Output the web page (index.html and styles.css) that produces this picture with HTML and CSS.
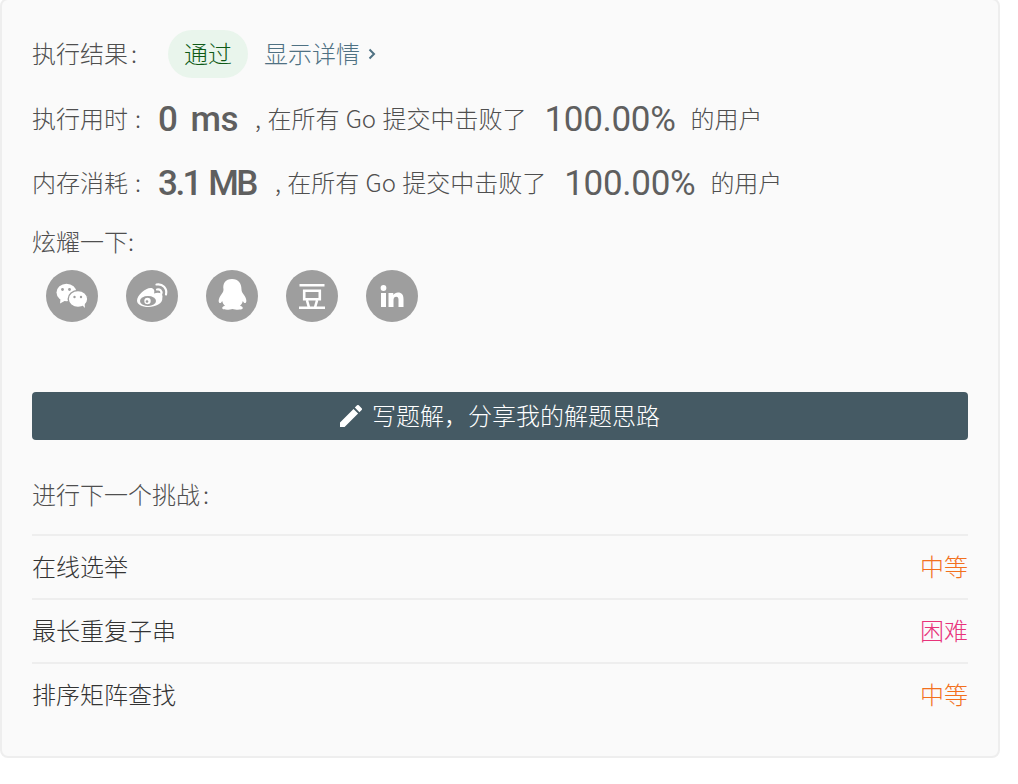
FILE: index.html
```html
<!DOCTYPE html>
<html lang="zh">
<head>
<meta charset="utf-8">
<title>提交结果</title>
<link rel="stylesheet" href="styles.css">
</head>
<body>
<main class="card">
  <div class="result-row">
    <span class="label">执行结果<i class="colon">:</i></span>
    <span class="badge">通过</span>
    <a class="details">显示详情<svg class="chev" viewBox="0 0 8 12" width="8" height="12"><path d="M1.500 1.500l4.500 4.500-4.500 4.500" fill="none" stroke="currentColor" stroke-width="2"/></svg></a>
  </div>
  <div class="stat stat-time">
    <span class="label">执行用时<i class="colon wide">:</i></span><strong class="big num0 num-time">0 ms</strong><span class="txt">, 在所有 Go 提交中击败了</span><strong class="big pct">100.00%</strong><span class="txt">的用户</span>
  </div>
  <div class="stat stat-mem">
    <span class="label">内存消耗<i class="colon wide">:</i></span><strong class="big num0 num-mem">3.1 MB</strong><span class="txt">, 在所有 Go 提交中击败了</span><strong class="big pct">100.00%</strong><span class="txt">的用户</span>
  </div>
  <div class="share-title">炫耀一下:</div>
  <div class="share">
    <span class="soc"><svg viewBox="0 0 52 52" width="52" height="52"><ellipse cx="20.500" cy="22.500" rx="10" ry="8.800" fill="#fff"/><path d="M14.500 29l-.5 4.500 5.500-3z" fill="#fff"/><ellipse cx="32" cy="29" rx="9.800" ry="8.500" fill="#fff" stroke="#9e9e9e" stroke-width="1.400"/><path d="M36 35l3 3-.5-5z" fill="#fff"/><circle cx="16.500" cy="19.500" r="1.400" fill="#9e9e9e"/><circle cx="23.500" cy="19.500" r="1.400" fill="#9e9e9e"/><circle cx="28.500" cy="27" r="1.200" fill="#9e9e9e"/><circle cx="35" cy="27" r="1.200" fill="#9e9e9e"/></svg></span>
    <span class="soc"><svg viewBox="0 0 52 52" width="52" height="52"><path d="M11 30.500c0-5.500 8.500-12.500 13.500-12.500 3.500 0 4.500 2.500 3.500 5.500 4.500-1.500 8.500-.5 8.500 3 0 .7-.2 1.300-.2 1.700C37 33 29.500 37 22.500 37 16 37 11 34.500 11 30.500z" fill="#fff"/><ellipse cx="22" cy="31" rx="8" ry="5" fill="#9e9e9e"/><circle cx="21.500" cy="31" r="3.200" fill="#fff"/><circle cx="21" cy="31.500" r="1.300" fill="#9e9e9e"/><path d="M31 19.500c3-.7 5 1.500 4.300 4.300M30.500 14.500c6-1.200 11 4 9.500 10" fill="none" stroke="#fff" stroke-width="2.200" stroke-linecap="round"/></svg></span>
    <span class="soc"><svg viewBox="0 0 52 52" width="52" height="52"><path d="M26 9c6.500 0 9.500 4.500 9.500 10.500 0 2 1 3.500 2.500 5.500 2.500 3.500 3 7 1.500 8-1 .5-2-.7-2.700-2-.5 2-1.300 3.500-2.800 4.800 2.200.8 3.200 1.700 2.700 2.700-.7 1.500-7 1.500-10.200.5-3.200 1-9.500 1-10.200-.5-.5-1 .5-1.900 2.700-2.700-1.500-1.300-2.300-2.800-2.800-4.800-.7 1.300-1.700 2.500-2.700 2-1.500-1-1-4.500 1.500-8 1.500-2 2.500-3.500 2.500-5.500C16.500 13.500 19.500 9 26 9z" fill="#fff"/></svg></span>
    <span class="soc"><svg viewBox="0 0 52 52" width="52" height="52"><path d="M13.500 15.300h25M18.200 20.700h15.600v8.500H18.200zM13 37.700h26M21 30.500l2 7M31 30.500l-2 7" fill="none" stroke="#fff" stroke-width="2.600"/></svg></span>
    <span class="soc"><svg viewBox="0 0 52 52" width="52" height="52"><circle cx="17.500" cy="18" r="2.900" fill="#fff"/><path d="M15 23h5v14h-5zM22.500 23h4.800v2c1-1.500 2.700-2.400 4.700-2.400 3.700 0 5.500 2.400 5.500 6.300V37h-5v-7.200c0-2-.7-3.100-2.300-3.100-1.700 0-2.700 1.200-2.700 3.300v7h-5z" fill="#fff"/></svg></span>
  </div>
  <button class="write">
    <svg viewBox="3 3 18 18" width="22" height="22"><path d="M3 17.250V21h3.750L17.810 9.940l-3.750-3.750L3 17.250zM20.710 7.040a1 1 0 0 0 0-1.410l-2.340-2.340a1 1 0 0 0-1.410 0l-1.830 1.830 3.750 3.750 1.830-1.830z" fill="#fff"/></svg>
    <span class="write-text">写题解&#xFF0C;分享我的解题思路</span>
  </button>
  <div class="next-title">进行下一个挑战<i class="colon">:</i></div>
  <ul class="next">
    <li><span>在线选举</span><span class="medium">中等</span></li>
    <li><span>最长重复子串</span><span class="hard">困难</span></li>
    <li><span>排序矩阵查找</span><span class="medium">中等</span></li>
  </ul>
</main>
</body>
</html>
```
FILE: styles.css
```css
* { box-sizing: border-box; }
html, body { margin: 0; background: #fff; }
body {
  font-family: "Noto Sans CJK SC", "Noto Sans", sans-serif;
  font-size: 24px;
  font-weight: 300;
  color: #4f4f4f;
  overflow: hidden;
  height: 784px;
}
.card {
  width: 1000px;
  height: 760px;
  margin-top: -2px;
  background: #fafafa;
  border: 2px solid #eeeeee;
  border-radius: 8px;
  padding: 30px 30px 0;
}
.colon { font-style: normal; margin-left: 3px; }
.colon.wide { margin-left: 7px; }
.result-row { display: flex; align-items: center; height: 48px; }
.result-row .label { width: 136px; padding-bottom: 4px; }
.badge {
  width: 80px; height: 48px; border-radius: 24px;
  background: #e9f5ec; color: #0f5a16; padding-bottom: 4px;
  display: flex; align-items: center; justify-content: center;
}
.details { margin-left: 16px; color: #4f7183; display: flex; align-items: center; padding-bottom: 4px; }
.chev { margin-left: 8px; margin-top: 4px; }
.stat { display: flex; align-items: center; height: 64px; white-space: nowrap; }
.stat-time { margin-top: 9px; }
.big {
  font-family: Roboto, "Noto Sans", sans-serif;
  font-size: 35px;
  color: #5f5f5f;
  padding-top: 1px;
}
.stat .label { width: 126px; padding-bottom: 4px; }
.txt { padding-bottom: 4px; word-spacing: 1px; }
.num0 { font-weight: 500; }
.num-time { margin-right: 17px; letter-spacing: -.5px; word-spacing: 5px; }
.num-mem { margin-right: 19px; letter-spacing: -2.500px; word-spacing: 2px; }
.pct { margin: 0 15px 0 18px; font-weight: 400; letter-spacing: -.3px; }
.share-title { margin-top: 8px; line-height: 36px; }
.share { display: flex; gap: 28px; padding-left: 14px; margin-top: 11px; }
.soc { width: 52px; height: 52px; border-radius: 50%; background: #9e9e9e; display: block; }
.soc svg { display: block; }
.write {
  margin-top: 70px; width: 936px; height: 48px; border: 0; border-radius: 4px;
  background: #455a64; color: #fff; font: inherit;
  display: flex; align-items: center; justify-content: center; gap: 10px;
}
.write-text { padding-bottom: 4px; }
.next-title { margin-top: 36px; line-height: 36px; }
.next { list-style: none; margin: 22px 0 0; padding: 0; width: 936px; }
.next li {
  height: 64px; border-top: 2px solid #eeeeee; padding-bottom: 3px;
  display: flex; justify-content: space-between; align-items: center; color: #333;
}
.medium { color: #f2701d; }
.hard { color: #e8337a; }
```
